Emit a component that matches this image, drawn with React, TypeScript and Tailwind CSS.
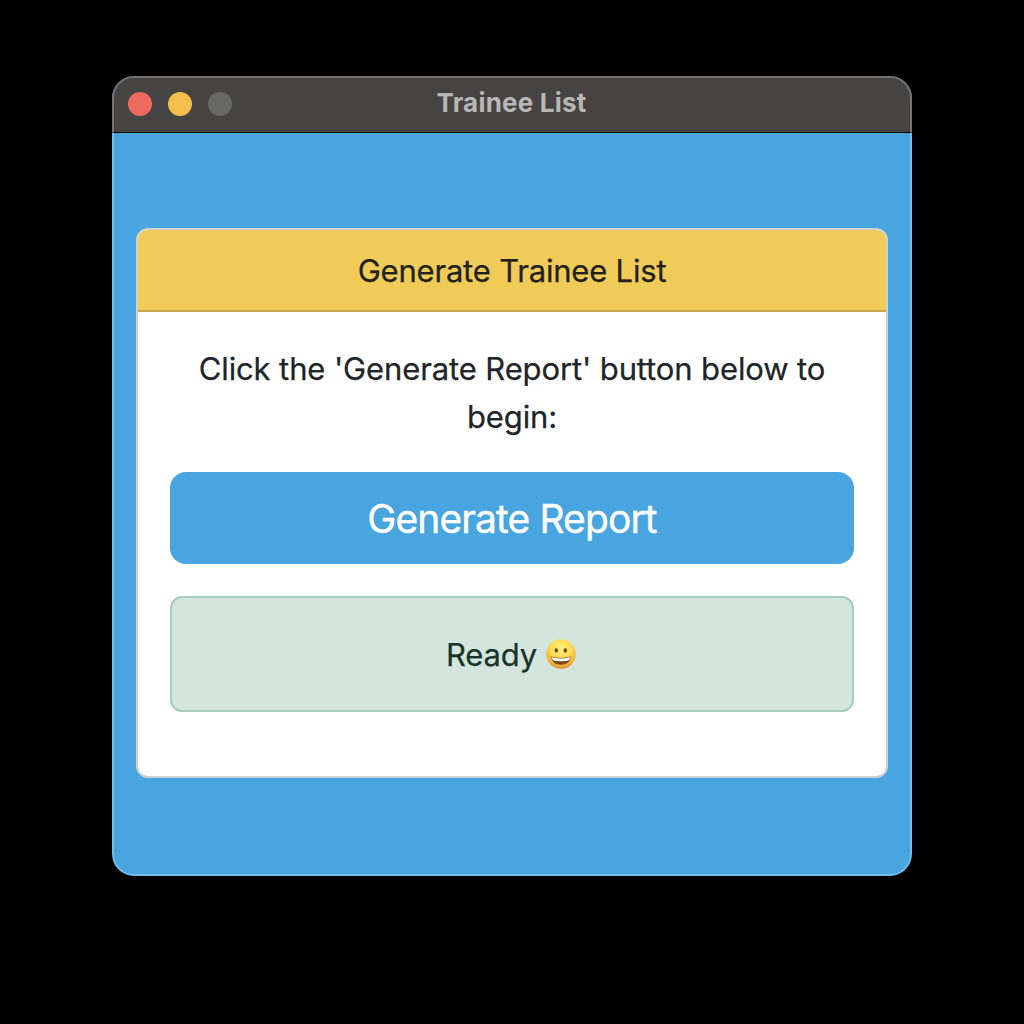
function GrinningFace() {
  return (
    <svg viewBox="0 0 30 30" className="size-[30px]" role="img" aria-label="Grinning face">
      <defs>
        <radialGradient id="face" cx="50%" cy="30%" r="72%">
          <stop offset="0" stopColor="#fff07a" />
          <stop offset="0.5" stopColor="#fcd955" />
          <stop offset="0.8" stopColor="#f3b43c" />
          <stop offset="1" stopColor="#d48a2e" />
        </radialGradient>
      </defs>
      <circle cx="15" cy="15" r="14.8" fill="url(#face)" />
      <ellipse cx="10.3" cy="11.4" rx="1.7" ry="2.2" fill="#6b4a14" />
      <ellipse cx="19.3" cy="11.4" rx="1.7" ry="2.2" fill="#6b4a14" />
      <path d="M4.9 17.6Q15 20.5 25.1 17.6Q24 25.8 15 25.8Q6 25.8 4.9 17.6Z" fill="#7b4c18" />
      <path d="M5.5 18.2Q15 20.8 24.5 18.2Q24 21 22.4 21.5Q15 22.9 7.6 21.5Q6 21 5.5 18.2Z" fill="#fff" />
    </svg>
  );
}

export default function App() {
  return (
    <div className="flex h-screen w-full justify-center bg-black pt-[76px] font-['Inter',sans-serif]">
      <div className="relative flex h-[800px] w-[800px] flex-col overflow-hidden rounded-[22px] bg-[#48a5e0] after:pointer-events-none after:absolute after:inset-0 after:rounded-[22px] after:border-2 after:border-white/25">
        <header className="grid h-[57px] shrink-0 grid-cols-[1fr_auto_1fr] items-center border-b border-black bg-[#464442] px-4">
          <div className="flex gap-4">
            <span className="size-6 rounded-full bg-[#ed6a5e]" />
            <span className="size-6 rounded-full bg-[#f5bf4f]" />
            <span className="size-6 rounded-full bg-[#686866]" />
          </div>
          <h1 className="mr-px pb-0.5 text-[26px] leading-8 font-bold tracking-[0.2px] text-[#b9b7b5]">Trainee List</h1>
        </header>
        <main className="flex flex-1 flex-col px-6 pt-[95px]">
          <section className="h-[550px] rounded-xl border-2 border-[#cfd0d2] bg-white text-center text-[31px] leading-[48px] tracking-[-0.12px] text-[#212529] [-webkit-text-stroke:0.25px_currentColor]">
            <h2 className="h-[82px] rounded-t-[10px] border-b-2 border-[#c9a650] bg-[#f0cb57] pt-[17px] tracking-[-0.2px] text-[#23211c]">Generate Trainee List</h2>
            <div className="px-8 pt-[33px]">
              <p>Click the 'Generate Report' button below to<br />begin:</p>
              <button className="mt-[31px] h-[92px] w-full rounded-2xl bg-[#48a5e0] pt-px text-[39px] tracking-[-0.9px] text-white [-webkit-text-stroke:0.4px_white]">Generate Report</button>
              <div className="mt-8 flex h-[116px] items-center justify-center gap-[9px] rounded-xl border-2 border-[#a9ccbd] bg-[#d4e5dd] pr-0.5 text-[#17352a]">
                <span className="pt-px">Ready</span>
                <GrinningFace />
              </div>
            </div>
          </section>
        </main>
      </div>
    </div>
  );
}
